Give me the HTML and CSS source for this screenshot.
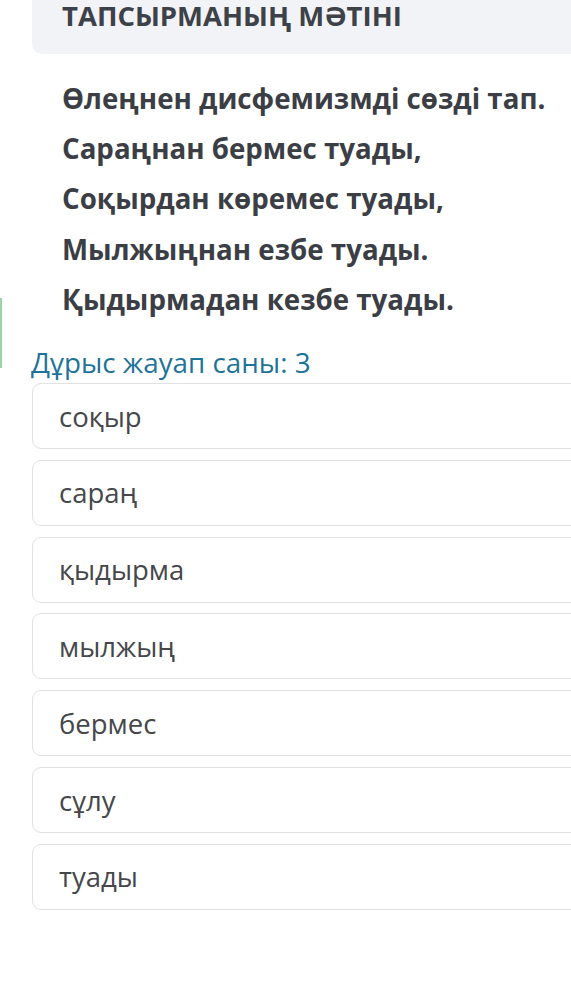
FILE: index.html
```html
<!DOCTYPE html>
<html lang="kk">
<head>
<meta charset="utf-8">
<title>Тапсырма</title>
<link rel="stylesheet" href="styles.css">
</head>
<body>
<div class="page">
  <div class="task-head">
    <h1 class="task-title">ТАПСЫРМАНЫҢ МӘТІНІ</h1>
  </div>
  <div class="poem">
    <p>Өлеңнен дисфемизмді сөзді тап.</p>
    <p>Сараңнан бермес туады,</p>
    <p>Соқырдан көремес туады,</p>
    <p>Мылжыңнан езбе туады.</p>
    <p>Қыдырмадан кезбе туады.</p>
  </div>
  <div class="side-mark"></div>
  <div class="answer-count">Дұрыс жауап саны: 3</div>
  <ul class="options">
    <li class="option">соқыр</li>
    <li class="option">сараң</li>
    <li class="option">қыдырма</li>
    <li class="option">мылжың</li>
    <li class="option">бермес</li>
    <li class="option">сұлу</li>
    <li class="option">туады</li>
  </ul>
</div>
</body>
</html>
```
FILE: styles.css
```css
html, body {
  margin: 0;
  padding: 0;
  background: #ffffff;
}
body {
  font-family: "Open Sans", "Noto Sans", sans-serif;
  overflow: hidden;
  width: 571px;
  height: 1004px;
}
.page {
  position: relative;
  padding-left: 32px;
}
.task-head {
  height: 54px;
  background: #f2f3f7;
  border-radius: 0 0 0 10px;
  margin-right: -20px;
  padding-left: 30px;
}
.task-title {
  margin: 0;
  padding-top: 1px;
  font-size: 27.5px;
  line-height: 30px;
  font-weight: 700;
  color: #3d4148;
}
.poem {
  padding: 19px 0 0 30px;
}
.poem p {
  margin: 0;
  font-size: 27.7px;
  line-height: 50.2px;
  font-weight: 700;
  color: #3b3e44;
}
.side-mark {
  position: absolute;
  left: 0;
  top: 298px;
  width: 2px;
  height: 70px;
  background: #9dd3a8;
}
.answer-count {
  margin: 20px 0 3px -1px;
  font-size: 27.8px;
  line-height: 36px;
  color: #1f7399;
}
.options {
  list-style: none;
  margin: 0 -40px 0 0;
  padding: 0;
  display: flex;
  flex-direction: column;
  gap: 10.8px;
}
.option {
  height: 64px;
  border: 1px solid #e2e2e2;
  border-radius: 9px;
  padding-left: 26px;
  display: flex;
  align-items: center;
  font-size: 27.5px;
  color: #45474b;
}
```
